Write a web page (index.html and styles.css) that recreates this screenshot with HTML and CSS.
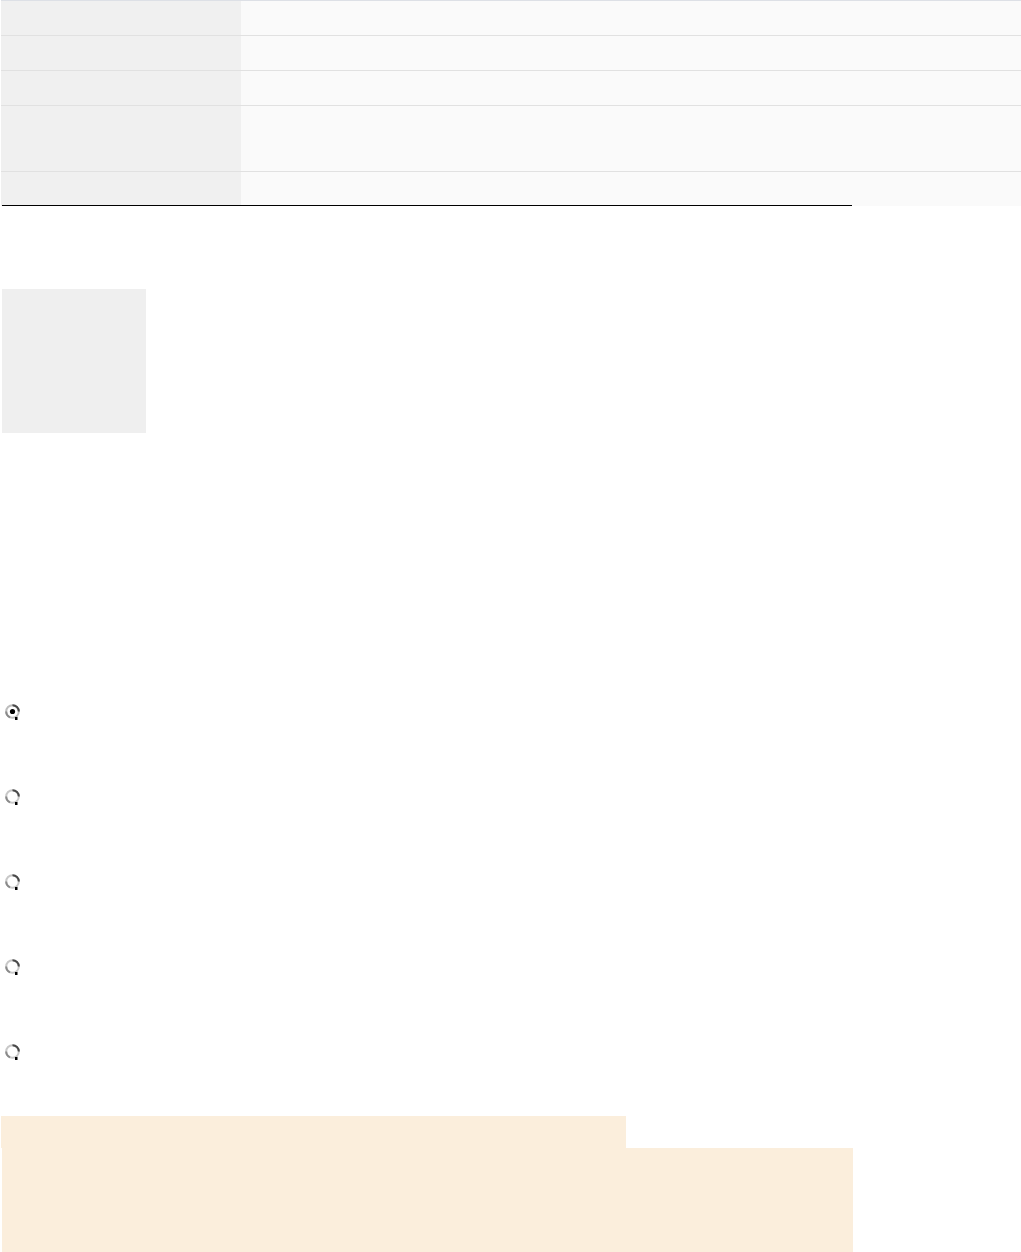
FILE: index.html
```html
<!DOCTYPE html>
<html lang="en">
<head>
<meta charset="utf-8">
<title>Form</title>
<link rel="stylesheet" href="styles.css">
</head>
<body>
<section class="specs">
  <table class="spec-table">
    <tr class="row-top"><th></th><td></td></tr>
    <tr><th></th><td></td></tr>
    <tr><th></th><td></td></tr>
    <tr class="row-tall"><th></th><td></td></tr>
    <tr class="row-last"><th></th><td></td></tr>
  </table>
  <div class="rule"></div>
</section>

<div class="thumb"></div>

<ul class="options">
  <li class="option">
    <svg class="radio" width="17" height="17" viewBox="0 0 17 17">
      <circle cx="8.5" cy="8.5" r="6.3" fill="#fff" stroke="#bdbdbd" stroke-width="2"/>
      <path d="M8.5 2.2 A6.3 6.3 0 0 1 14.8 8.5" fill="none" stroke="#4a4a4a" stroke-width="2"/>
      <path d="M2.2 8.5 A6.3 6.3 0 0 0 6 14.3" fill="none" stroke="#8a8a8a" stroke-width="2"/>
      <rect x="11" y="14" width="2.5" height="3" fill="#000"/>
      <circle cx="8.5" cy="8.5" r="2.6" fill="#000"/>
    </svg>
  </li>
  <li class="option">
    <svg class="radio" width="17" height="17" viewBox="0 0 17 17">
      <circle cx="8.5" cy="8.5" r="6.3" fill="#fff" stroke="#c8c8c8" stroke-width="2"/>
      <path d="M8.5 2.2 A6.3 6.3 0 0 1 14.8 8.5" fill="none" stroke="#4a4a4a" stroke-width="2"/>
      <path d="M2.2 8.5 A6.3 6.3 0 0 0 6 14.3" fill="none" stroke="#8a8a8a" stroke-width="2"/>
      <rect x="11" y="14" width="2.5" height="3" fill="#000"/>
    </svg>
  </li>
  <li class="option">
    <svg class="radio" width="17" height="17" viewBox="0 0 17 17">
      <circle cx="8.5" cy="8.5" r="6.3" fill="#fff" stroke="#c8c8c8" stroke-width="2"/>
      <path d="M8.5 2.2 A6.3 6.3 0 0 1 14.8 8.5" fill="none" stroke="#4a4a4a" stroke-width="2"/>
      <path d="M2.2 8.5 A6.3 6.3 0 0 0 6 14.3" fill="none" stroke="#8a8a8a" stroke-width="2"/>
      <rect x="11" y="14" width="2.5" height="3" fill="#000"/>
    </svg>
  </li>
  <li class="option">
    <svg class="radio" width="17" height="17" viewBox="0 0 17 17">
      <circle cx="8.5" cy="8.5" r="6.3" fill="#fff" stroke="#c8c8c8" stroke-width="2"/>
      <path d="M8.5 2.2 A6.3 6.3 0 0 1 14.8 8.5" fill="none" stroke="#4a4a4a" stroke-width="2"/>
      <path d="M2.2 8.5 A6.3 6.3 0 0 0 6 14.3" fill="none" stroke="#8a8a8a" stroke-width="2"/>
      <rect x="11" y="14" width="2.5" height="3" fill="#000"/>
    </svg>
  </li>
  <li class="option">
    <svg class="radio" width="17" height="17" viewBox="0 0 17 17">
      <circle cx="8.5" cy="8.5" r="6.3" fill="#fff" stroke="#c8c8c8" stroke-width="2"/>
      <path d="M8.5 2.2 A6.3 6.3 0 0 1 14.8 8.5" fill="none" stroke="#4a4a4a" stroke-width="2"/>
      <path d="M2.2 8.5 A6.3 6.3 0 0 0 6 14.3" fill="none" stroke="#8a8a8a" stroke-width="2"/>
      <rect x="11" y="14" width="2.5" height="3" fill="#000"/>
    </svg>
  </li>
</ul>

<div class="notice">
  <div class="notice-head"></div>
  <div class="notice-body"></div>
</div>
</body>
</html>
```

FILE: styles.css
```css
html, body {
  margin: 0;
  padding: 0;
  background: #ffffff;
  font-family: "Liberation Sans", Arial, sans-serif;
}

.specs {
  width: 1020px;
  margin-left: 1px;
}

.spec-table {
  width: 1020px;
  border-collapse: collapse;
  border-spacing: 0;
}

.spec-table th,
.spec-table td {
  padding: 0;
  height: 34px;
  border-bottom: 1px solid #e1e1e1;
}

.spec-table th {
  width: 240px;
  background: #f0f0f0;
}

.spec-table td {
  background: #fafafa;
}

.spec-table .row-top th,
.spec-table .row-top td {
  border-top: 1px solid #dde0e6;
  height: 34px;
}

.spec-table .row-tall th,
.spec-table .row-tall td {
  height: 65px;
}

.spec-table .row-last th,
.spec-table .row-last td {
  height: 34px;
  border-bottom: none;
}

.rule {
  width: 850px;
  margin-left: 1px;
  margin-top: -1px;
  height: 0;
  border-top: 1px solid #000000;
}

.thumb {
  width: 144px;
  height: 144px;
  margin: 83px 0 0 2px;
  background: #efefef;
}

.options {
  list-style: none;
  margin: 270px 0 0 0;
  padding: 0 0 0 4px;
  display: flex;
  flex-direction: column;
  gap: 68px;
}

.option {
  height: 17px;
  display: flex;
  align-items: center;
}

.radio {
  display: block;
}

.notice {
  margin-top: 56px;
}

.notice-head {
  width: 625px;
  height: 32px;
  margin-left: 1px;
  background: #fbeedc;
}

.notice-body {
  width: 851px;
  height: 140px;
  margin-left: 2px;
  background: #fbeedc;
}
```
